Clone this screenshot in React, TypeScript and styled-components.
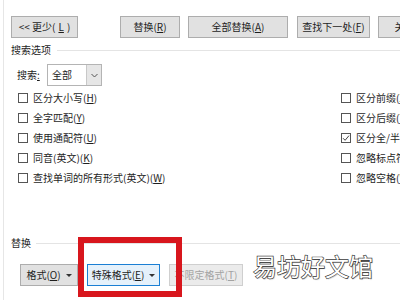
import React from "react";
import styled, { createGlobalStyle } from "styled-components";

const Global = createGlobalStyle`
  html, body { margin: 0; padding: 0; background: #fff; }
  body {
    font-family: "Noto Sans CJK SC", "Noto Sans", sans-serif;
    color: #1e1e1e;
  }
`;

const Page = styled.div`
  position: relative;
  width: 400px;
  height: 300px;
  overflow: hidden;
  background: #fff;
`;

const Frame = styled.div`
  margin-left: 3px;
  height: 300px;
  border-left: 1px solid #e6e6e6;
  display: flex;
  flex-direction: column;
  font-size: 10px;
  line-height: 12px;
`;

const TopBar = styled.div`
  display: flex;
  padding: 16px 0 0 7px;
  white-space: nowrap;
`;

const Btn = styled.div<{ $w: number; $ml?: number; $variant?: "normal" | "focus" | "disabled" }>`
  flex: none;
  box-sizing: border-box;
  width: ${(p) => p.$w}px;
  height: 22px;
  margin-left: ${(p) => p.$ml ?? 0}px;
  display: flex;
  align-items: center;
  justify-content: center;
  gap: 3px;
  background: ${(p) => (p.$variant === "focus" ? "#e5f1fb" : p.$variant === "disabled" ? "#ebebeb" : "#e1e1e1")};
  border: 1px solid ${(p) => (p.$variant === "focus" ? "#1a7fd4" : p.$variant === "disabled" ? "#cfcfcf" : "#adadad")};
  color: ${(p) => (p.$variant === "disabled" ? "#a3a3a3" : "#1e1e1e")};
  font-size: 10px;
`;

const Caret = styled.span`
  width: 0;
  height: 0;
  border-left: 3px solid transparent;
  border-right: 3px solid transparent;
  border-top: 3px solid #333;
  margin-left: 2px;
`;

const GroupHead = styled.div<{ $mt: number; $lineFrom: number }>`
  display: flex;
  align-items: center;
  margin-top: ${(p) => p.$mt}px;
  padding-left: 7px;
  height: 14px;
  gap: ${(p) => p.$lineFrom}px;
`;

const GroupLine = styled.div`
  flex: 1;
  height: 1px;
  background: #e4e4e4;
`;

const SearchRow = styled.div`
  display: flex;
  align-items: center;
  margin-top: 7px;
  padding-left: 13px;
  height: 22px;
`;

const SearchLabel = styled.span`
  width: 30px;
`;

const Select = styled.div`
  box-sizing: border-box;
  width: 55px;
  height: 22px;
  border: 1px solid #b4b4b4;
  display: flex;
  background: #fff;
`;

const SelectValue = styled.span`
  flex: 1;
  padding-left: 4px;
  display: flex;
  align-items: center;
`;

const SelectArrow = styled.span`
  width: 14px;
  background: #e6e6e6;
  border-left: 1px solid #c8c8c8;
  display: flex;
  align-items: center;
  justify-content: center;
`;

const Options = styled.div`
  display: grid;
  grid-template-columns: 323px 1fr;
  grid-auto-rows: 20px;
  margin-top: 2px;
  padding-left: 14px;
  white-space: nowrap;
`;

const Opt = styled.label`
  display: flex;
  align-items: center;
  gap: 5px;
  overflow: hidden;
`;

const Box = styled.span`
  flex: none;
  box-sizing: border-box;
  width: 10px;
  height: 10px;
  border: 1px solid #555;
  background: #fff;
  display: flex;
  align-items: center;
  justify-content: center;
`;

const Spacer = styled.div`
  flex: 1;
`;

const BottomBar = styled.div`
  display: flex;
  padding: 0 0 14px 16px;
  margin-top: 14px;
`;

const RedBox = styled.div`
  position: absolute;
  left: 78px;
  top: 237px;
  width: 104px;
  height: 60px;
  box-sizing: border-box;
  border: 6px solid #d8161d;
  pointer-events: none;
`;

const Watermark = styled.div`
  position: absolute;
  left: 253px;
  top: 251px;
  font-family: "Noto Sans CJK SC", sans-serif;
  font-size: 24px;
  line-height: 30px;
  font-weight: 400;
  letter-spacing: 0px;
  color: #fff;
  -webkit-text-stroke: 1.3px #3a3a3a;
  paint-order: stroke fill;
  text-shadow: 1px 1px 1px rgba(0, 0, 0, 0.25);
`;

const U = styled.u`
  text-underline-offset: 1px;
`;

type Item = { t: string; k: string; checked?: boolean };

const left: Item[] = [
  { t: "区分大小写", k: "H" },
  { t: "全字匹配", k: "Y" },
  { t: "使用通配符", k: "U" },
  { t: "同音(英文)", k: "K" },
  { t: "查找单词的所有形式(英文)", k: "W" },
];
const right: Item[] = [
  { t: "区分前缀", k: "X" },
  { t: "区分后缀", k: "T" },
  { t: "区分全/半角", k: "M", checked: true },
  { t: "忽略标点符号", k: "S" },
  { t: "忽略空格", k: "W" },
];

const Label = ({ t, k }: { t: string; k: string }) => (
  <span>
    {t}(<U>{k}</U>)
  </span>
);

const Check = () => (
  <svg width="8" height="8" viewBox="0 0 8 8">
    <path d="M1 4.2 L3.1 6.3 L7 1.6" fill="none" stroke="#444" strokeWidth="1" />
  </svg>
);

const Option = ({ item }: { item: Item }) => (
  <Opt>
    <Box>{item.checked && <Check />}</Box>
    <Label t={item.t} k={item.k} />
  </Opt>
);

export default function App() {
  const rows = left.map((l, i) => [l, right[i]]);
  return (
    <Page>
      <Global />
      <Frame>
        <TopBar>
          <Btn $w={67}>
            {"<< 更少("}
            <U>L</U>)
          </Btn>
          <Btn $w={60} $ml={42}>
            <Label t="替换" k="R" />
          </Btn>
          <Btn $w={100} $ml={8}>
            <Label t="全部替换" k="A" />
          </Btn>
          <Btn $w={73} $ml={9}>
            <Label t="查找下一处" k="F" />
          </Btn>
          <Btn $w={60} $ml={8}>
            <Label t="关闭" k="" />
          </Btn>
        </TopBar>
        <GroupHead $mt={5} $lineFrom={6}>
          <span>搜索选项</span>
          <GroupLine />
        </GroupHead>
        <SearchRow>
          <SearchLabel>
            搜索<U>:</U>
          </SearchLabel>
          <Select>
            <SelectValue>全部</SelectValue>
            <SelectArrow>
              <svg width="7" height="5" viewBox="0 0 7 5">
                <path d="M0.5 1 L3.5 4 L6.5 1" fill="none" stroke="#555" strokeWidth="1" />
              </svg>
            </SelectArrow>
          </Select>
        </SearchRow>
        <Options>
          {rows.map(([l, r], i) => (
            <React.Fragment key={i}>
              <Option item={l} />
              <Option item={r} />
            </React.Fragment>
          ))}
        </Options>
        <Spacer />
        <GroupHead $mt={0} $lineFrom={5}>
          <span>替换</span>
          <GroupLine />
        </GroupHead>
        <BottomBar>
          <Btn $w={58}>
            <Label t="格式" k="O" />
            <Caret />
          </Btn>
          <Btn $w={73} $ml={9} $variant="focus">
            <Label t="特殊格式" k="E" />
            <Caret />
          </Btn>
          <Btn $w={74} $ml={9} $variant="disabled">
            <Label t="不限定格式" k="T" />
          </Btn>
        </BottomBar>
      </Frame>
      <RedBox />
      <Watermark>易坊好文馆</Watermark>
    </Page>
  );
}
